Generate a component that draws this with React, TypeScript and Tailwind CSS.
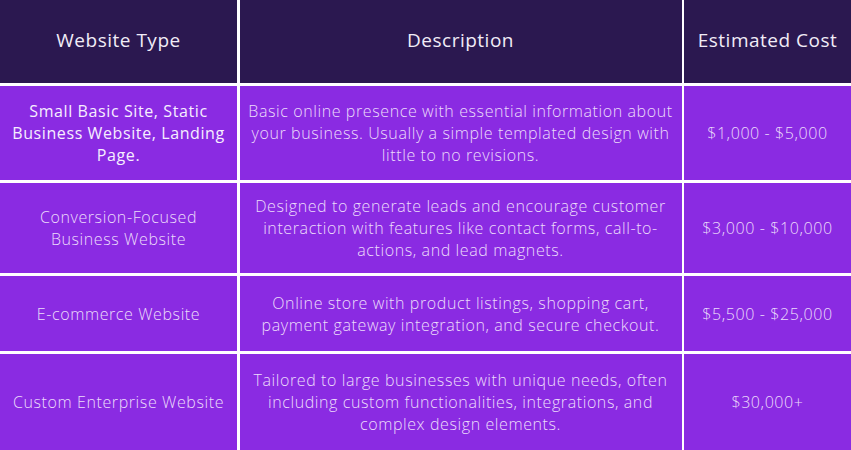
import React from "react";

const rows: { type: string[]; desc: string[]; cost: string; h: string; strong?: boolean }[] = [
  {
    type: ["Small Basic Site, Static", "Business Website, Landing", "Page."],
    desc: [
      "Basic online presence with essential information about",
      "your business. Usually a simple templated design with",
      "little to no revisions.",
    ],
    cost: "$1,000 - $5,000",
    h: "h-[94px]",
    strong: true,
  },
  {
    type: ["Conversion-Focused", "Business Website"],
    desc: [
      "Designed to generate leads and encourage customer",
      "interaction with features like contact forms, call-to-",
      "actions, and lead magnets.",
    ],
    cost: "$3,000 - $10,000",
    h: "h-[90px]",
  },
  {
    type: ["E-commerce Website"],
    desc: [
      "Online store with product listings, shopping cart,",
      "payment gateway integration, and secure checkout.",
    ],
    cost: "$5,500 - $25,000",
    h: "h-[75px]",
  },
  {
    type: ["Custom Enterprise Website"],
    desc: [
      "Tailored to large businesses with unique needs, often",
      "including custom functionalities, integrations, and",
      "complex design elements.",
    ],
    cost: "$30,000+",
    h: "h-[96px]",
  },
];

function Lines({ lines }: { lines: string[] }) {
  return (
    <>
      {lines.map((l, i) => (
        <span key={i} className="block whitespace-nowrap">
          {l}
        </span>
      ))}
    </>
  );
}

export default function App() {
  const font = { fontFamily: '"Open Sans", "Noto Sans", sans-serif' };
  return (
    <div className="w-[851px] h-[450px] bg-white overflow-hidden" style={font}>
      <div className="grid grid-cols-[237px_442px_167px] gap-x-[2.5px] gap-y-[3px]">
        <div className="h-[83px] pb-[3px] bg-[#2b1850] flex items-center justify-center text-[19px] tracking-[0.5px] text-[#f1ecf7]">
          Website Type
        </div>
        <div className="h-[83px] pb-[3px] bg-[#2b1850] flex items-center justify-center text-[19px] tracking-[0.5px] text-[#f1ecf7]">
          Description
        </div>
        <div className="h-[83px] pb-[3px] bg-[#2b1850] flex items-center justify-center text-[19px] tracking-[0.5px] text-[#f1ecf7]">
          Estimated Cost
        </div>
        {rows.map((r, i) => (
          <React.Fragment key={i}>
            <div
              className={`${r.h} bg-[#8a2be2] flex flex-col items-center justify-center text-center text-[16px] leading-[22px] tracking-[0.6px] ${
                r.strong ? "text-[#f6eeff] font-normal" : "text-[#ecdcfb] font-light"
              }`}
            >
              <Lines lines={r.type} />
            </div>
            <div
              className={`${r.h} bg-[#8a2be2] flex flex-col items-center justify-center text-center text-[16px] leading-[22px] tracking-[0.6px] text-[#ecdcfb] font-light`}
            >
              <Lines lines={r.desc} />
            </div>
            <div
              className={`${r.h} bg-[#8a2be2] flex items-center justify-center text-center text-[16px] leading-[22px] tracking-[0.6px] text-[#ecdcfb] font-light`}
            >
              {r.cost}
            </div>
          </React.Fragment>
        ))}
      </div>
    </div>
  );
}
